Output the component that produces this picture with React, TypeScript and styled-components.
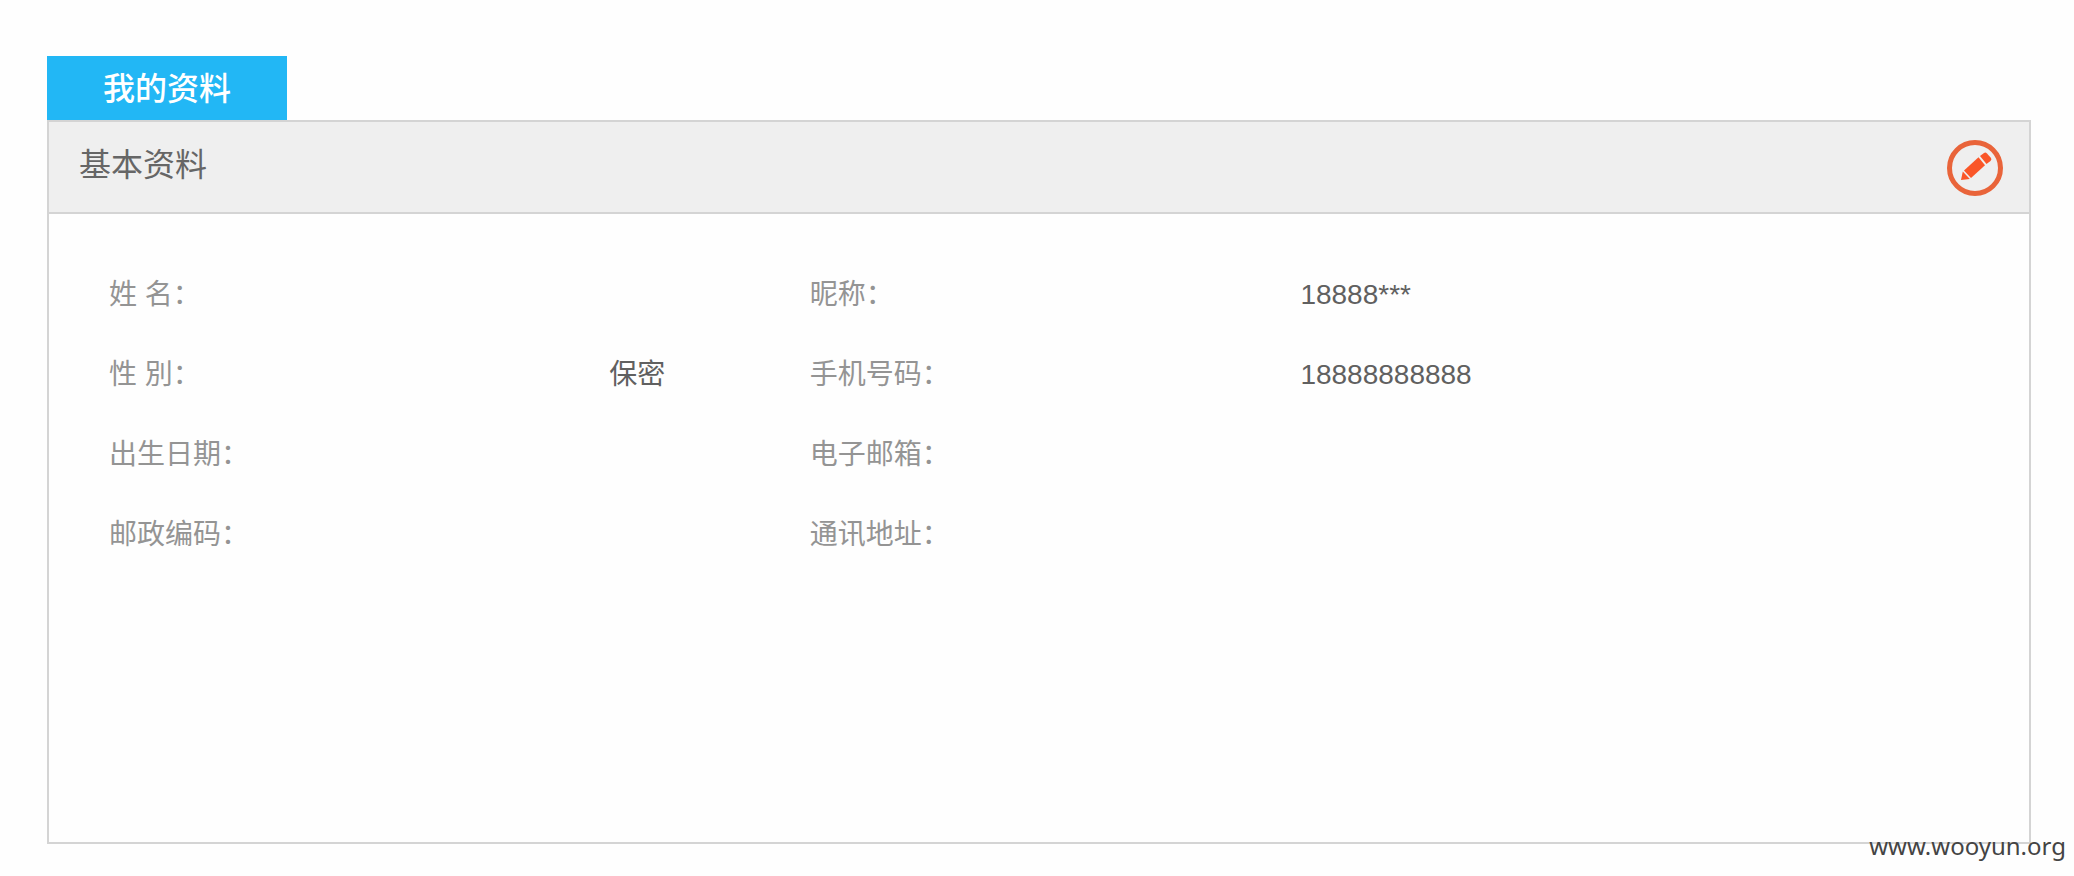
import React from "react";
import styled, { createGlobalStyle } from "styled-components";

const GlobalStyle = createGlobalStyle`
  * { box-sizing: border-box; }
  body {
    margin: 0;
    background: #fefefe;
    color: #666;
    font-family: "Liberation Sans", "Noto Sans CJK SC", sans-serif;
  }
`;

const Page = styled.main`
  position: relative;
  padding: 56px 43px 32px 47px;
`;

const Tab = styled.button`
  display: block;
  width: 240px;
  height: 64px;
  padding: 2px 0 0;
  border: 0;
  background: #22b7f5;
  color: #fff;
  font-family: inherit;
  font-size: 32px;
  font-weight: 500;
  line-height: 62px;
  text-align: center;
  cursor: pointer;
`;

const Panel = styled.section`
  border: 2px solid #d4d4d4;
`;

const PanelHeader = styled.header`
  display: flex;
  align-items: center;
  justify-content: space-between;
  height: 92px;
  padding: 2px 26px 0 30px;
  border-bottom: 2px solid #d4d4d4;
  background: #efefef;
`;

const PanelTitle = styled.h2`
  margin: 0;
  padding-bottom: 6px;
  font-size: 32px;
  line-height: 48px;
  font-weight: 400;
`;

const EditButton = styled.button`
  display: flex;
  width: 56px;
  height: 56px;
  padding: 0;
  border: 0;
  background: none;
  cursor: pointer;
`;

const PanelBody = styled.div`
  min-height: 628px;
  padding: 41px 0 0 60px;
`;

const Details = styled.table`
  width: 100%;
  table-layout: fixed;
  border-collapse: collapse;
  font-size: 28px;
  line-height: 40px;
`;

const Column = styled.col<{ $share: string }>`
  width: ${(p) => p.$share};
`;

const Label = styled.th`
  height: 80px;
  padding: 0;
  color: #949494;
  font-weight: 400;
  text-align: left;
`;

const Value = styled.td`
  padding: 0 0 0 1px;
  color: #606060;
`;

const Watermark = styled.div`
  position: absolute;
  right: 8px;
  bottom: 14px;
  color: #444;
  font-family: "Noto Sans", sans-serif;
  font-size: 24px;
  line-height: 32px;
`;

const rows = [
  ["姓 名：", "", "昵称：", "18888***"],
  ["性 別：", "保密", "手机号码：", "18888888888"],
  ["出生日期：", "", "电子邮箱：", ""],
  ["邮政编码：", "", "通讯地址：", ""],
];

function PencilIcon() {
  return (
    <svg width="56" height="56" viewBox="0 0 56 56" aria-hidden="true">
      <circle cx="28" cy="28" r="25.5" fill="none" stroke="#e9643a" strokeWidth="5" />
      <g fill="#fa5628">
        <path d="M33 16 L37 13 Q38.5 12 40 13.5 L44 18 Q45 19.5 43.5 21 L39.5 24 Z" />
        <path d="M31.5 17.2 L38 25.2 L24 38 L17 30.5 Z" />
        <path d="M15.8 31.6 L22.8 39 L14 40 Z" />
      </g>
    </svg>
  );
}

export default function App() {
  return (
    <>
      <GlobalStyle />
      <Page>
        <Tab type="button">我的资料</Tab>
        <Panel>
          <PanelHeader>
            <PanelTitle>基本资料</PanelTitle>
            <EditButton type="button" aria-label="编辑">
              <PencilIcon />
            </EditButton>
          </PanelHeader>
          <PanelBody>
            <Details>
              <colgroup>
                <Column $share="26%" />
                <Column $share="10.5%" />
                <Column $share="25.5%" />
                <Column $share="38%" />
              </colgroup>
              <tbody>
                {rows.map(([labelA, valueA, labelB, valueB]) => (
                  <tr key={labelA}>
                    <Label scope="row">{labelA}</Label>
                    <Value>{valueA}</Value>
                    <Label scope="row">{labelB}</Label>
                    <Value>{valueB}</Value>
                  </tr>
                ))}
              </tbody>
            </Details>
          </PanelBody>
        </Panel>
        <Watermark>www.wooyun.org</Watermark>
      </Page>
    </>
  );
}
